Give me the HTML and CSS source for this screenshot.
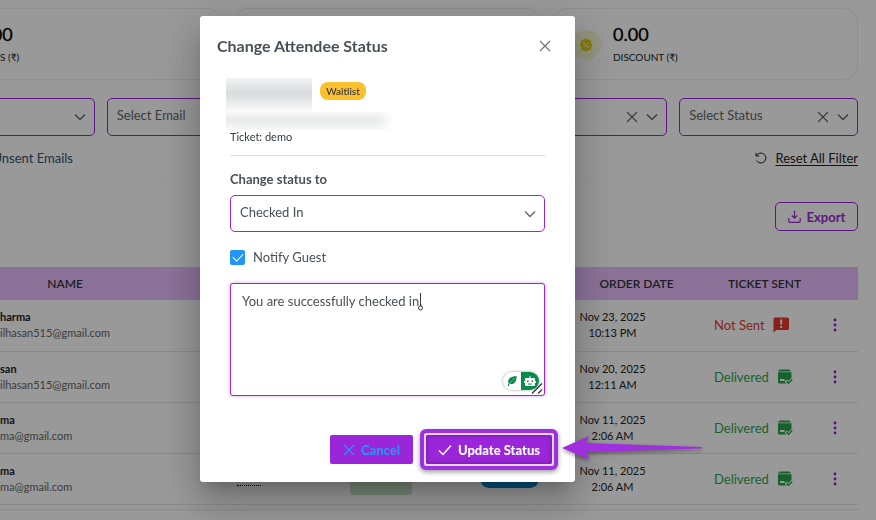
FILE: index.html
```
<!DOCTYPE html>
<html lang="en">
<head>
    <meta charset="UTF-8">
    <meta name="viewport" content="width=device-width, initial-scale=1.0">
    <title>Attendees</title>
    <link rel="stylesheet" href="styles.css">
</head>
<body>
    <svg class="sprite" aria-hidden="true">
        <symbol id="chevron" viewBox="0 0 12 12"><path d="M1 3.5 6 8.5 11 3.5" fill="none" stroke="currentColor" stroke-width="1.4"/></symbol>
        <symbol id="close" viewBox="0 0 12 12"><path d="M1 1 11 11M11 1 1 11" fill="none" stroke="currentColor" stroke-width="1.2"/></symbol>
        <symbol id="check" viewBox="0 0 14 12"><path d="M1 6.5 5 10.5 13 1.5" fill="none" stroke="currentColor" stroke-width="1.5"/></symbol>
        <symbol id="dots" viewBox="0 0 4 14"><circle cx="2" cy="2" r="1.4"/><circle cx="2" cy="7" r="1.4"/><circle cx="2" cy="12" r="1.4"/></symbol>
        <symbol id="delivered" viewBox="0 0 16 16">
            <path d="M2.5 .5h10l1.5 2H1z"/>
            <path d="M1 3.2h13.5V9l-3.300 3-1.700-1.500L7.500 12.500 9.500 14.500H2.500Q1 14.500 1 13zM3 10v2h4.500v-2z" fill-rule="evenodd"/>
            <path d="M9.500 12.200 11.500 14.200 15.200 10.500" fill="none" stroke="currentColor" stroke-width="1.500"/>
        </symbol>
        <symbol id="not-sent" viewBox="0 0 16 16"><path d="M1.500 .5h13Q16 .5 16 2v9.500Q16 13 14.500 13H3.500L.5 15.500V2Q.5 .5 1.500 .5zM7.200 2.500v5h2v-5zM7.200 9v2h2V9z" fill-rule="evenodd"/></symbol>
    </svg>

    <main class="page">
        <section class="stats">
            <div class="stat">
                <span class="stat-icon"></span>
                <div>
                    <div class="stat-value">0.00</div>
                    <div class="stat-label">SALES (₹)</div>
                </div>
            </div>
            <div class="stat"></div>
            <div class="stat">
                <span class="stat-icon">
                    <svg width="14" height="14" viewBox="0 0 14 14">
                        <path d="M7 .5 9 1.600 11.500 2 12 4.700 13.500 7 12 9.300 11.500 12 9 12.400 7 13.500 5 12.400 2.500 12 2 9.300.5 7 2 4.700 2.500 2 5 1.600z" fill="#e0ce10"/>
                        <path d="M5 9 9 5" stroke="#fffde0"/>
                        <circle cx="5" cy="5.300" r=".9" fill="#fffde0"/><circle cx="9" cy="8.700" r=".9" fill="#fffde0"/>
                    </svg>
                </span>
                <div>
                    <div class="stat-value">0.00</div>
                    <div class="stat-label">DISCOUNT (₹)</div>
                </div>
            </div>
        </section>

        <section class="filters">
            <div class="field">
                <select aria-label="Ticket"><option></option></select>
                <svg class="chevron"><use href="#chevron"/></svg>
            </div>
            <div class="field">
                <select aria-label="Email"><option>Select Email</option></select>
                <svg class="chevron"><use href="#chevron"/></svg>
            </div>
            <div class="field">
                <select aria-label="Order"><option></option></select>
                <svg class="chevron"><use href="#chevron"/></svg>
            </div>
            <div class="field">
                <select aria-label="Date"><option></option></select>
                <button class="clear" aria-label="Clear"><svg><use href="#close"/></svg></button>
                <svg class="chevron"><use href="#chevron"/></svg>
            </div>
            <div class="field">
                <select aria-label="Status"><option>Select Status</option></select>
                <button class="clear" aria-label="Clear"><svg><use href="#close"/></svg></button>
                <svg class="chevron"><use href="#chevron"/></svg>
            </div>
        </section>

        <div class="links">
            <a class="unsent" href="#">Unsent Emails</a>
            <a class="reset" href="#">
                <svg width="12" height="12" viewBox="0 0 12 12" fill="none" stroke="currentColor"><path d="M1 .8V4h3.200M1.300 4A5 5 0 1 1 1.500 8.500"/></svg>
                <span>Reset All Filter</span>
            </a>
        </div>

        <section class="orders">
            <div class="toolbar">
                <button class="export">
                    <svg width="13" height="13" viewBox="0 0 13 13" fill="none" stroke="currentColor" stroke-width="1.200"><path d="M6.500 .5V8M3.800 5.500 6.500 8.200 9.200 5.500M.8 8v3q0 1.300 1.300 1.300h8.800q1.300 0 1.300-1.300V8"/></svg>
                    Export
                </button>
            </div>
            <table>
                <colgroup>
                    <col class="col-name"><col class="col-ticket"><col><col class="col-checkin"><col class="col-date"><col class="col-sent"><col class="col-menu">
                </colgroup>
                <thead>
                    <tr><th class="name">NAME</th><th></th><th></th><th></th><th>ORDER DATE</th><th>TICKET SENT</th><th></th></tr>
                </thead>
                <tbody>
                    <tr>
                        <td class="name"><b>harma</b><br>ilhasan515@gmail.com</td><td></td><td></td><td></td>
                        <td class="date">Nov 23, 2025<br>10:13 PM</td>
                        <td class="sent failed"><span>Not Sent <svg><use href="#not-sent"/></svg></span></td>
                        <td class="menu"><button aria-label="Actions"><svg><use href="#dots"/></svg></button></td>
                    </tr>
                    <tr>
                        <td class="name"><b>san</b><br>ilhasan515@gmail.com</td><td></td><td></td><td></td>
                        <td class="date">Nov 20, 2025<br>12:11 AM</td>
                        <td class="sent"><span>Delivered <svg><use href="#delivered"/></svg></span></td>
                        <td class="menu"><button aria-label="Actions"><svg><use href="#dots"/></svg></button></td>
                    </tr>
                    <tr>
                        <td class="name"><b>ma</b><br>ma@gmail.com</td><td></td><td></td><td></td>
                        <td class="date">Nov 11, 2025<br>2:06 AM</td>
                        <td class="sent"><span>Delivered <svg><use href="#delivered"/></svg></span></td>
                        <td class="menu"><button aria-label="Actions"><svg><use href="#dots"/></svg></button></td>
                    </tr>
                    <tr>
                        <td class="name"><b>ma</b><br>ma@gmail.com</td>
                        <td><span class="dotted"></span></td>
                        <td><span class="badge-green"></span></td>
                        <td class="checkin"><span class="pill-blue"></span></td>
                        <td class="date">Nov 11, 2025<br>2:06 AM</td>
                        <td class="sent"><span>Delivered <svg><use href="#delivered"/></svg></span></td>
                        <td class="menu"><button aria-label="Actions"><svg><use href="#dots"/></svg></button></td>
                    </tr>
                </tbody>
            </table>
        </section>
    </main>

    <div class="overlay">
        <div class="modal" role="dialog" aria-labelledby="modal-title">
            <header class="modal-header">
                <h2 id="modal-title">Change Attendee Status</h2>
                <button class="close" aria-label="Close"><svg><use href="#close"/></svg></button>
            </header>
            <div class="modal-body">
                <div class="guest">
                    <span class="hidden-name"></span>
                    <span class="waitlist">Waitlist</span>
                </div>
                <div class="hidden-email"></div>
                <div class="ticket">Ticket: demo</div>
                <hr>
                <label class="label" for="status">Change status to</label>
                <div class="field">
                    <select id="status"><option>Checked In</option></select>
                    <svg class="chevron"><use href="#chevron"/></svg>
                </div>
                <div class="notify">
                    <input type="checkbox" id="notify" checked>
                    <label for="notify">Notify Guest</label>
                </div>
                <div class="message">
                    <textarea aria-label="Message">You are successfully checked in.</textarea>
                    <svg class="caret" width="8" height="20" viewBox="0 0 8 20" fill="none" stroke="#343a40"><path d="M4.500 1v13"/><circle cx="4.500" cy="16" r="2"/></svg>
                    <div class="assistant">
                        <span><svg width="10" height="12" viewBox="0 0 10 12"><path d="M9.500 1Q10 6 7 8.200 4.500 9.500 2.600 8.800L1.500 11.500.6 11 1.700 8.200Q0 5 3.500 2.500 6 1 9.500 1z" fill="#078a4a"/><path d="M2 9 7.500 3" stroke="#fff" stroke-width=".4"/></svg></span>
                        <span class="bot"><svg width="12" height="12" viewBox="0 0 12 12" fill="#fff"><path d="M5.500 1h1v2h-1zM2 3h8q1 0 1 1v6q0 1-1 1H2q-1 0-1-1V4q0-1 1-1zM3 5.500v1.600h1.600V5.500zM7.400 5.500v1.600H9V5.500zM4 8.500v1h4v-1z" fill-rule="evenodd"/><path d="M0 6h1v2H0zM11 6h1v2h-1z"/></svg></span>
                    </div>
                    <svg class="grip" width="12" height="11" viewBox="0 0 12 11" stroke="#444" stroke-width="1.500"><path d="M1 10.500 11 .5M7 10.500 11 6.500"/></svg>
                </div>
            </div>
            <footer class="modal-footer">
                <button class="btn cancel"><svg><use href="#close"/></svg>Cancel</button>
                <div class="highlight">
                    <button class="btn update"><svg><use href="#check"/></svg>Update Status</button>
                    <svg class="arrow" width="142" height="26" viewBox="0 0 142 26"><path d="M1 13 28 1 25 8 141 12V13.500L25 17 28 24.500z" fill="#a02fdf"/></svg>
                </div>
            </footer>
        </div>
    </div>
</body>
</html>
```

FILE: styles.css
```
* {
    box-sizing: border-box;
}
body {
    margin: 0;
    background: #fff;
    font-family: Lato, "Noto Sans", sans-serif;
    font-size: 12px;
    color: #222;
    overflow: hidden;
}
button, select, textarea {
    font-family: inherit;
}
button {
    padding: 0;
    border: none;
    background: none;
    cursor: pointer;
}
.sprite {
    display: none;
}

/* page behind the dialog */
.page {
    margin-left: -84px;
    padding: 8px 18px 0 0;
    height: 100vh;
    overflow: hidden;
}
.stats {
    display: grid;
    grid-template-columns: repeat(3, 1fr);
    gap: 12px;
    margin-bottom: 18px;
}
.stat {
    display: flex;
    align-items: center;
    gap: 12px;
    height: 72px;
    padding: 2px 18px 0;
    border: 1px solid #ececec;
    border-radius: 14px;
}
.stat-icon {
    display: flex;
    align-items: center;
    justify-content: center;
    width: 30px;
    height: 30px;
    border-radius: 50%;
    background: #f7f6d4;
}
.stat-value {
    font-size: 18px;
    line-height: 24px;
    color: #000;
    -webkit-text-stroke: 0.3px #000;
}
.stat-label {
    font-size: 10px;
    line-height: 22px;
}
.filters {
    display: grid;
    grid-template-columns: repeat(5, 1fr);
    gap: 12px;
    margin-bottom: 12px;
}
.field {
    position: relative;
    color: #5f676e;
}
.field select {
    display: block;
    appearance: none;
    width: 100%;
    height: 38px;
    padding: 0 9px 4px;
    border: 1px solid #9b26d9;
    border-radius: 5px;
    background: transparent;
    font-size: 13px;
    color: #5f676e;
}
.modal .field select {
    height: 37px;
    color: #495057;
}
.chevron {
    position: absolute;
    right: 9px;
    top: 13px;
    width: 12px;
    height: 12px;
}
.clear {
    position: absolute;
    right: 29px;
    top: 13px;
    color: inherit;
}
.clear svg {
    display: block;
    width: 12px;
    height: 12px;
}
.links {
    display: flex;
    justify-content: space-between;
    margin-bottom: 15px;
    font-size: 13px;
    line-height: 20px;
}
.unsent {
    width: 157px;
    text-align: right;
    text-decoration: none;
    color: #33536e;
}
.reset {
    display: flex;
    align-items: center;
    gap: 8px;
    color: #222;
    text-decoration: none;
}
.reset span {
    text-decoration: underline;
    text-underline-offset: 2px;
}
.orders {
    padding-left: 84px;
    padding-bottom: 4px;
    border-bottom: 1px solid #ececec;
    box-shadow: 0 0 2px #eee;
}
.toolbar {
    display: flex;
    justify-content: flex-end;
    padding: 19px 0 36px;
}
.export {
    display: flex;
    align-items: center;
    justify-content: center;
    gap: 6px;
    width: 83px;
    height: 29px;
    border: 1px solid #9b26d9;
    border-radius: 5px;
    color: #9b26d9;
    font-size: 13px;
    font-weight: bold;
}
table {
    width: 100%;
    table-layout: fixed;
    border-collapse: collapse;
}
.col-name {
    width: 200px;
}
.col-ticket {
    width: 97px;
}
.col-checkin {
    width: 96px;
}
.col-date {
    width: 151px;
}
.col-sent {
    width: 105px;
}
.col-menu {
    width: 41px;
}
th {
    height: 33px;
    padding: 0;
    background: #e9bfff;
    font-size: 12px;
    font-weight: 600;
    color: #333;
}
th.name {
    padding-right: 70px;
}
td {
    height: 51px;
    padding: 0;
    border-bottom: 1px solid #e4e6e8;
    font-size: 11px;
    line-height: 16px;
    text-align: center;
}
td.name {
    text-align: left;
    color: #666;
}
td.name b {
    color: #222;
}
td.date {
    padding-right: 48px;
}
td.checkin {
    padding-right: 8px;
}
.sent span {
    display: flex;
    align-items: center;
    gap: 8px;
    padding-left: 2px;
    font-size: 13px;
    white-space: nowrap;
    color: #2ea44f;
}
.sent svg {
    width: 16px;
    height: 16px;
    fill: currentColor;
    color: #23a34a;
}
.sent.failed span, .sent.failed svg {
    color: #e53935;
}
.menu {
    padding-right: 5px;
}
.menu button {
    display: block;
    margin: 0 auto;
}
.menu svg {
    display: block;
    width: 4px;
    height: 14px;
    fill: #8a1fc4;
}
.dotted, .badge-green, .pill-blue {
    display: inline-block;
    vertical-align: middle;
}
.dotted {
    width: 24px;
    height: 12px;
    border-bottom: 1px dotted #000;
}
.badge-green {
    width: 62px;
    height: 32px;
    border-radius: 3px;
    background: #c8e6c9;
}
.pill-blue {
    width: 59px;
    height: 18px;
    border-radius: 9px;
    background: #0288d1;
}

/* dialog */
.overlay {
    position: fixed;
    inset: 0;
    display: flex;
    justify-content: center;
    align-items: flex-start;
    padding: 16px 101px 0 0;
    background: rgba(0, 0, 0, 0.4);
}
.modal {
    width: 375px;
    border-radius: 3px;
    background: #fff;
    color: #495057;
    box-shadow: 0 11px 15px -7px rgba(0, 0, 0, 0.2), 0 24px 38px 3px rgba(0, 0, 0, 0.14), 0 9px 46px 8px rgba(0, 0, 0, 0.12);
}
.modal-header {
    display: flex;
    align-items: center;
    justify-content: space-between;
    padding: 19px 24px 21px 17px;
}
.modal-header h2 {
    margin: 0;
    font-size: 16px;
    line-height: 22px;
}
.close {
    color: #6c757d;
}
.close svg {
    display: block;
    width: 12px;
    height: 12px;
}
.modal-body {
    padding: 0 30px;
}
.guest {
    display: flex;
    align-items: center;
    gap: 8px;
    height: 34px;
    margin-left: -4px;
}
.hidden-name {
    width: 86px;
    height: 34px;
    background: linear-gradient(#f3f4f4, #dcdddf 40%, #dcdddf 50%, #fbfbfb);
}
.waitlist {
    width: 46px;
    margin-bottom: 8px;
    border-radius: 8px;
    background: #fbc02d;
    font-size: 10px;
    line-height: 18px;
    font-weight: 500;
    text-align: center;
    color: #333;
}
.hidden-email {
    width: 168px;
    height: 18px;
    margin-left: -4px;
    background: linear-gradient(90deg, transparent 90%, #fff), linear-gradient(#f8f8f8, #e9eaeb 45%, #f8f8f8);
}
.ticket {
    font-size: 11px;
    line-height: 13px;
    color: #343a40;
}
hr {
    margin: 12px 0 12px;
    border: none;
    border-top: 1px solid #dee2e6;
}
.label {
    display: block;
    margin-bottom: 5px;
    font-size: 13px;
    line-height: 22px;
    font-weight: bold;
}
.notify {
    display: flex;
    align-items: center;
    gap: 8px;
    margin: 14px 0 15px;
    font-size: 13px;
    line-height: 22px;
}
.notify input {
    appearance: none;
    display: grid;
    place-items: center;
    width: 15px;
    height: 15px;
    margin: 0;
    border-radius: 2px;
    background: #2196f3;
}
.notify input::after {
    content: "";
    width: 9px;
    height: 5px;
    margin-bottom: 3px;
    border: solid #fff;
    border-width: 0 0 1px 1px;
    transform: rotate(-45deg);
}
.message {
    position: relative;
}
textarea {
    display: block;
    width: 100%;
    height: 113px;
    padding: 7px 11px;
    border: 1px solid #9b26d9;
    border-radius: 3px;
    outline: none;
    resize: none;
    box-shadow: 0 0 3px 1px #e6c8f7;
    font-size: 13px;
    line-height: 20px;
    color: #495057;
}
.caret {
    position: absolute;
    left: 186px;
    top: 9px;
}
.assistant {
    position: absolute;
    right: 6px;
    bottom: 6px;
    display: flex;
    width: 36px;
    height: 18px;
    border-radius: 9px;
    background: #fff;
    box-shadow: 0 0 3px rgba(0, 0, 0, 0.4);
    overflow: hidden;
}
.assistant span {
    display: flex;
    flex: 1;
    align-items: center;
    justify-content: center;
}
.assistant .bot {
    background: #078a4a;
}
.grip {
    position: absolute;
    right: 2px;
    bottom: 2px;
}
.modal-footer {
    display: flex;
    align-items: center;
    justify-content: flex-end;
    gap: 7px;
    padding: 33px 17px 12px;
}
.btn {
    display: flex;
    align-items: center;
    justify-content: center;
    height: 29px;
    border-radius: 2px;
    background: #9b26d9;
    font-size: 13px;
    font-weight: 900;
}
.btn svg {
    width: 12px;
    height: 12px;
    margin-right: 6px;
}
.cancel {
    width: 83px;
    color: #2196f3;
}
.highlight {
    position: relative;
    padding: 2px;
    border: 4px solid #a02fdf;
    border-radius: 6px;
    background: #e2d6e8;
    box-shadow: 0 2px 5px rgba(0, 0, 0, 0.4);
}
.update {
    width: 126px;
    color: #fff;
    box-shadow: inset 0 0 5px #6a1599;
}
.update svg {
    width: 14px;
}
.arrow {
    position: absolute;
    left: 137px;
    top: 2px;
    filter: drop-shadow(0 2px 2px rgba(0, 0, 0, 0.4));
}
```
